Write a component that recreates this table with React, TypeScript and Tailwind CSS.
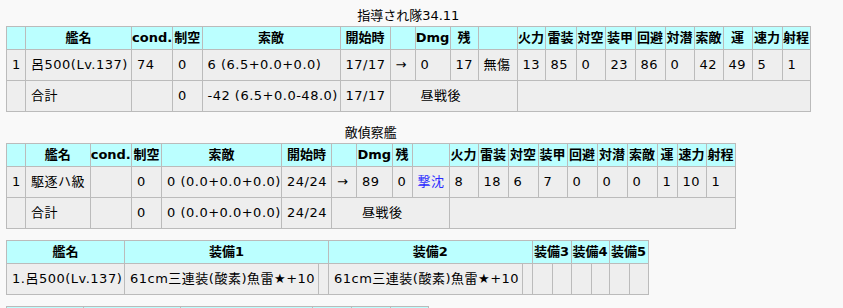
import React from "react";

const stats = ["火力", "雷装", "対空", "装甲", "回避", "対潜", "索敵", "運", "速力", "射程"];

function Th({ children, span }: { children?: React.ReactNode; span?: number }) {
  return (
    <th colSpan={span} className="border border-[#bbb] bg-[#bbffff] font-bold text-center px-0 py-0 h-[23px] whitespace-nowrap overflow-hidden">
      {children}
    </th>
  );
}

function Td({ children, span, className = "" }: { children?: React.ReactNode; span?: number; className?: string }) {
  return (
    <td colSpan={span} className={"border border-[#bbb] bg-[#eee] px-[5px] py-0 h-[31px] text-left tracking-[0.5px] whitespace-nowrap overflow-hidden " + className}>
      {children}
    </td>
  );
}

function Cols({ widths }: { widths: number[] }) {
  return (
    <colgroup>
      {widths.map((w, i) => (
        <col key={i} style={{ width: w }} />
      ))}
    </colgroup>
  );
}

const fleetCols = [19, 106, 41, 29.5, 138, 50, 25, 35, 28, 39, 28, 31, 29, 30, 30, 29, 29, 29, 30, 28];
const enemyCols = [19, 64.5, 41.5, 30, 120, 50, 25, 35.5, 20, 37, 29, 30, 30, 29, 30, 30, 30, 20, 29, 29];
const equipCols = [118, 193.5, 10.5, 193.5, 10, 20, 19, 20, 18, 20, 19];

function HeadRow() {
  return (
    <tr>
      <Th />
      <Th>艦名</Th>
      <Th>cond.</Th>
      <Th>制空</Th>
      <Th>索敵</Th>
      <Th>開始時</Th>
      <Th />
      <Th>Dmg</Th>
      <Th>残</Th>
      <Th />
      {stats.map((s) => (
        <Th key={s}>{s}</Th>
      ))}
    </tr>
  );
}

export default function App() {
  return (
    <div className="min-h-screen bg-[#f9f9f9] pt-[6px] text-[13px] text-black font-['DejaVu_Sans','Noto_Sans_CJK_JP',sans-serif]">
      <table className="ml-[6px] mb-[11px] table-fixed border-collapse w-[804px]">
        <caption className="h-[20px] leading-[20px] text-center">指導され隊34.11</caption>
        <Cols widths={fleetCols} />
        <thead>
          <HeadRow />
        </thead>
        <tbody>
          <tr>
            <Td>1</Td>
            <Td>呂500(Lv.137)</Td>
            <Td>74</Td>
            <Td>0</Td>
            <Td>6 (6.5+0.0+0.0)</Td>
            <Td>17/17</Td>
            <Td>→</Td>
            <Td>0</Td>
            <Td>17</Td>
            <Td>無傷</Td>
            {["13", "85", "0", "23", "86", "0", "42", "49", "5", "1"].map((v, i) => (
              <Td key={i}>{v}</Td>
            ))}
          </tr>
          <tr>
            <Td />
            <Td>合計</Td>
            <Td />
            <Td>0</Td>
            <Td>-42 (6.5+0.0-48.0)</Td>
            <Td>17/17</Td>
            <Td span={4} className="pl-[30px]">昼戦後</Td>
            <Td span={10} />
          </tr>
        </tbody>
      </table>

      <table className="ml-[6px] mb-[11px] table-fixed border-collapse w-[729px]">
        <caption className="h-[20px] leading-[20px] text-center">敵偵察艦</caption>
        <Cols widths={enemyCols} />
        <thead>
          <HeadRow />
        </thead>
        <tbody>
          <tr>
            <Td>1</Td>
            <Td>駆逐ハ級</Td>
            <Td />
            <Td>0</Td>
            <Td>0 (0.0+0.0+0.0)</Td>
            <Td>24/24</Td>
            <Td>→</Td>
            <Td>89</Td>
            <Td>0</Td>
            <Td className="text-[#2a2aff]">撃沈</Td>
            {["8", "18", "6", "7", "0", "0", "0", "1", "10", "1"].map((v, i) => (
              <Td key={i}>{v}</Td>
            ))}
          </tr>
          <tr>
            <Td />
            <Td>合計</Td>
            <Td />
            <Td>0</Td>
            <Td>0 (0.0+0.0+0.0)</Td>
            <Td>24/24</Td>
            <Td span={4} className="pl-[30px]">昼戦後</Td>
            <Td span={10} />
          </tr>
        </tbody>
      </table>

      <table className="ml-[6px] mb-[11px] table-fixed border-collapse w-[642px]">
        <Cols widths={equipCols} />
        <thead>
          <tr>
            <Th>艦名</Th>
            <Th span={2}>装備1</Th>
            <Th span={2}>装備2</Th>
            <Th span={2}>装備3</Th>
            <Th span={2}>装備4</Th>
            <Th span={2}>装備5</Th>
          </tr>
        </thead>
        <tbody>
          <tr>
            <Td>1.呂500(Lv.137)</Td>
            <Td>61cm三連装(酸素)魚雷★+10</Td>
            <Td />
            <Td>61cm三連装(酸素)魚雷★+10</Td>
            <Td />
            <Td />
            <Td />
            <Td />
            <Td />
            <Td />
            <Td />
          </tr>
        </tbody>
      </table>

      <table className="ml-[6px] table-fixed border-collapse w-[421px]">
        <Cols widths={[76.5, 97, 132, 39, 39, 38]} />
        <thead>
          <tr>
            <Th />
            <Th />
            <Th />
            <Th />
            <Th />
            <Th />
          </tr>
        </thead>
      </table>
    </div>
  );
}
